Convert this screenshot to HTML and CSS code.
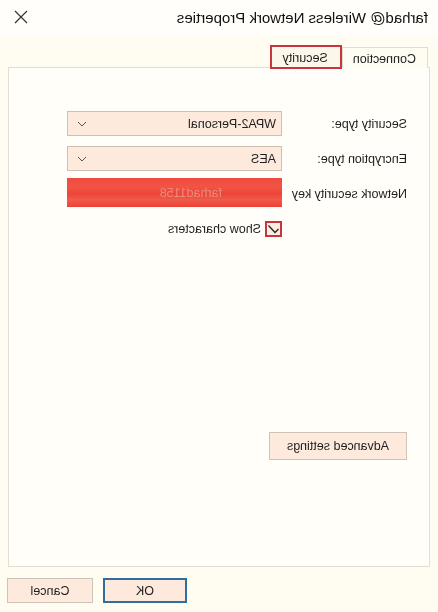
FILE: index.html
```html
<!DOCTYPE html>
<html lang="en">
<head>
    <meta charset="UTF-8">
    <title>farhad@ Wireless Network Properties</title>
    <link rel="stylesheet" href="styles.css">
</head>
<body>
    <div class="dialog">
        <div class="titlebar">
            <span class="title">farhad@ Wireless Network Properties</span>
            <svg class="close" width="14" height="14" viewBox="0 0 14 14">
                <path d="M1 1 L13 13 M13 1 L1 13" stroke="#333" stroke-width="1.2" fill="none"/>
            </svg>
        </div>

        <div class="tabs">
            <div class="tab">Connection</div>
            <div class="tab active">Security</div>
        </div>

        <div class="panel">
            <div class="form">
                <label class="label">Security type:</label>
                <div class="select">
                    <span>WPA2-Personal</span>
                    <svg class="chev" width="10" height="6" viewBox="0 0 10 6"><path d="M1 1 L5 5 L9 1" stroke="#555" fill="none"/></svg>
                </div>

                <label class="label">Encryption type:</label>
                <div class="select">
                    <span>AES</span>
                    <svg class="chev" width="10" height="6" viewBox="0 0 10 6"><path d="M1 1 L5 5 L9 1" stroke="#555" fill="none"/></svg>
                </div>

                <label class="label">Network security key</label>
                <div class="key"><span>farhad1158</span></div>

                <div></div>
                <div class="check-row">
                    <span class="checkbox">
                        <svg width="13" height="12" viewBox="0 0 13 12"><path d="M1.5 6 L5 9.5 L11.5 2.5" stroke="#222" stroke-width="1.3" fill="none"/></svg>
                    </span>
                    <span>Show characters</span>
                </div>
            </div>

            <button class="btn advanced">Advanced settings</button>
        </div>

        <div class="footer">
            <button class="btn ok">OK</button>
            <button class="btn">Cancel</button>
        </div>
    </div>
</body>
</html>
```

FILE: styles.css
```css
* {
    margin: 0;
    padding: 0;
    box-sizing: border-box;
}

body {
    font-family: "Liberation Sans", Arial, sans-serif;
    font-size: 12px;
    color: #1e1e1e;
    background: #fffcf1;
}

/* the whole dialog is shown mirrored */
.dialog {
    width: 438px;
    height: 612px;
    transform: scaleX(-1);
    background: #fffcf1;
}

.titlebar {
    height: 35px;
    display: flex;
    align-items: center;
    justify-content: space-between;
    padding: 0 14px 0 10px;
    background: #fffefa;
}

.title {
    font-size: 15px;
    color: #111;
    margin-top: -1px;
}

.close {
    margin-top: -1px;
}

.tabs {
    display: flex;
    align-items: flex-end;
    padding-left: 10px;
    height: 33px;
    margin-bottom: -1px;
}

.tab {
    height: 21px;
    padding: 4px 10px 0 11px;
    border: 1px solid #e2dbcf;
    border-bottom: none;
    background: #fffcf3;
    font-size: 12.5px;
}

.tab.active {
    height: 24px;
    padding: 4px 11px 0 12px;
    border: 2px solid #c8353f;
    background: #fdf6ea;
    margin-bottom: -1px;
    position: relative;
}

.panel {
    margin: 0 8px;
    height: 500px;
    border: 1px solid #e4ddd2;
    background: #fffef8;
    padding: 43px 0 0 22px;
}

.form {
    display: grid;
    grid-template-columns: 125px 215px;
    align-items: center;
    row-gap: 10px;
}

.label {
    font-size: 12.5px;
}

.select {
    height: 25px;
    border: 1px solid #cfc0b2;
    background: #fdeadd;
    display: flex;
    align-items: center;
    justify-content: space-between;
    padding: 0 9px 0 5px;
    font-size: 12.5px;
}

.key {
    height: 29px;
    margin-top: -3px;
    background: linear-gradient(180deg, #f04a3e 0%, #f25447 30%, #ee4438 55%, #f05a4c 75%, #ec4236 100%);
    display: flex;
    align-items: center;
    padding-left: 60px;
}

.key span {
    color: #e98c7c;
    font-size: 12.5px;
    filter: blur(0.6px);
}

.check-row {
    display: flex;
    align-items: center;
    gap: 4px;
    margin-top: 4px;
    font-size: 12.5px;
}

.checkbox {
    width: 17px;
    height: 16px;
    border: 2px solid #c8353f;
    background: #fdeee2;
    display: flex;
    align-items: center;
    justify-content: center;
}

.btn {
    font-family: "Liberation Sans", Arial, sans-serif;
    font-size: 12.5px;
    color: #1e1e1e;
    background: #fdeadd;
    border: 1px solid #cfc2b6;
    height: 25px;
    width: 86px;
}

.advanced {
    width: 138px;
    height: 28px;
    margin-top: 195px;
}

.footer {
    display: flex;
    justify-content: flex-end;
    gap: 10px;
    padding: 11px 7px 0 0;
}

.btn.ok {
    width: 84px;
    border: 2px solid #2f6e9e;
}
```
